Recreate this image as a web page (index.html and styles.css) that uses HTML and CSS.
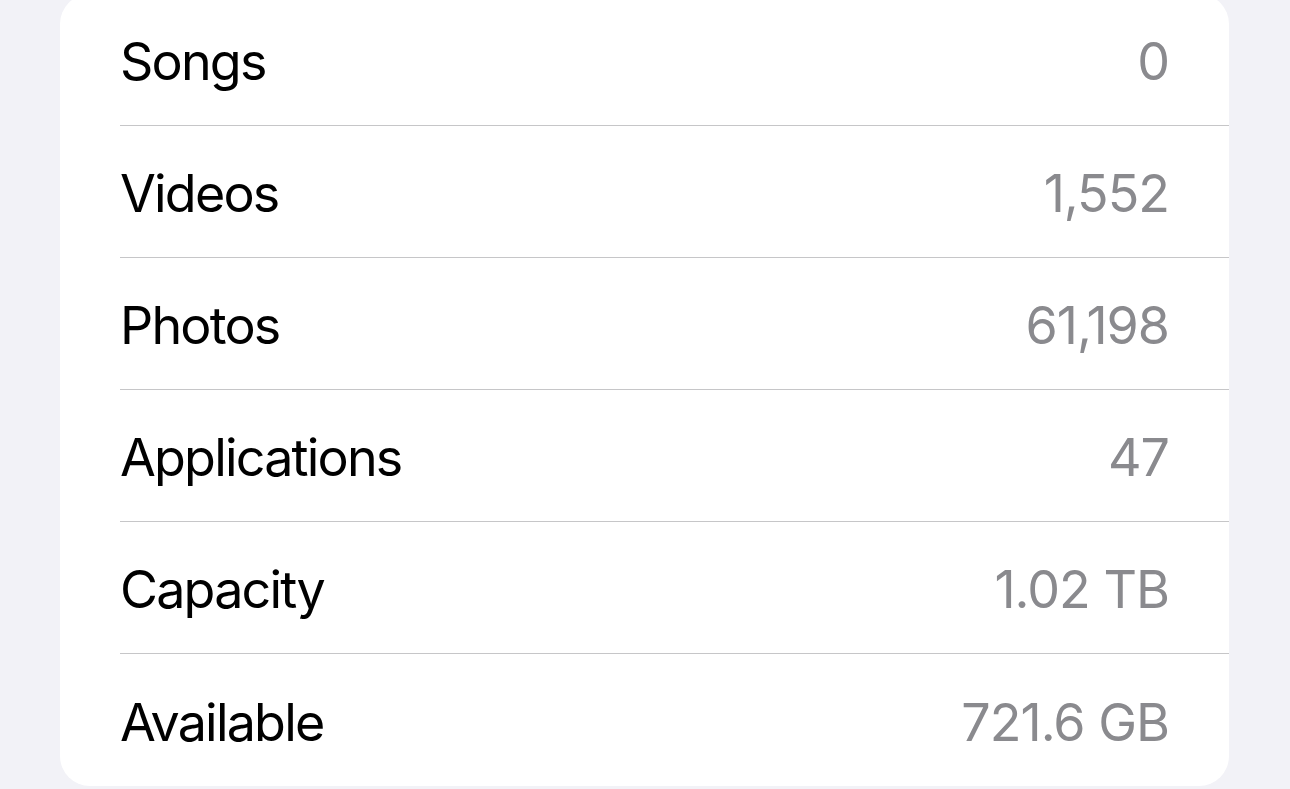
FILE: index.html
```html
<!DOCTYPE html>
<html lang="en">
  <head>
    <meta charset="UTF-8" />
    <meta name="viewport" content="width=device-width, initial-scale=1.0" />
    <title>About - Storage</title>
    <link rel="stylesheet" href="styles.css">
  </head>
  <body>
    <div class="list-box">
      <div class="row"><span class="label">Songs</span><span class="value">0</span></div>
      <div class="row"><span class="label">Videos</span><span class="value">1,552</span></div>
      <div class="row"><span class="label">Photos</span><span class="value">61,198</span></div>
      <div class="row"><span class="label">Applications</span><span class="value">47</span></div>
      <div class="row"><span class="label">Capacity</span><span class="value">1.02 TB</span></div>
      <div class="row"><span class="label">Available</span><span class="value">721.6 GB</span></div>
    </div>
  </body>
</html>
```

FILE: styles.css
```css
body {
  margin: 0;
  padding: 0;
  font-family: "Inter", "Liberation Sans", sans-serif;
  background-color: #f2f2f7;
  height: 100vh;
  overflow: hidden;
}

.list-box {
  background-color: white;
  border-radius: 30px;
  margin: -6px 0 0 60px;
  width: 1169px;
}

.row {
  display: flex;
  justify-content: space-between;
  align-items: center;
  box-sizing: border-box;
  height: 132px;
  padding-top: 4px;
  margin-left: 60px;
  padding-right: 61px;
  border-bottom: 1px solid #c6c6c8;
  font-size: 52px;
}

.row:last-child {
  border-bottom: none;
}

.label {
  color: black;
  letter-spacing: -1.8px;
}

.value {
  color: #8a8a8e;
  letter-spacing: -1px;
  margin-right: -1px;
}
```
